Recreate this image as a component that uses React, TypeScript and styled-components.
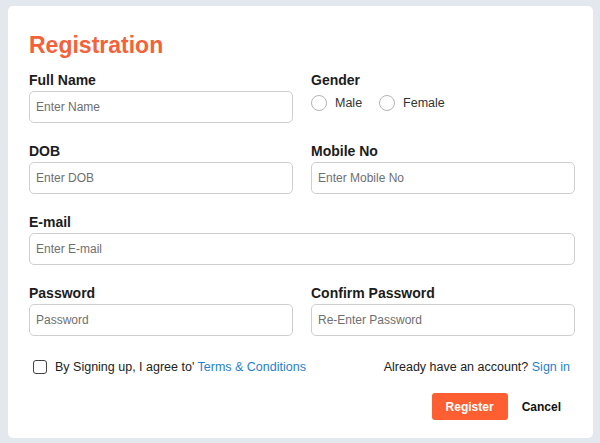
import styled, { createGlobalStyle } from 'styled-components'

const GlobalStyle = createGlobalStyle`
  body {
    margin: 0;
    background: #e3e7ee;
    font-family: "Liberation Sans", Arial, sans-serif;
  }
`

const Card = styled.form`
  box-sizing: border-box;
  width: 585px;
  margin: 6px 0 0 8px;
  padding: 26px 18px 18px 21px;
  background: #fff;
  border-radius: 5px;
`

const Title = styled.h1`
  margin: 0 0 14px;
  font-size: 23px;
  line-height: 26px;
  font-weight: 700;
  color: #f4623a;
`

const Grid = styled.div`
  display: grid;
  grid-template-columns: 264px 264px;
  column-gap: 18px;
  row-gap: 20px;
`

const Field = styled.div<{ $wide?: boolean }>`
  display: flex;
  flex-direction: column;
  grid-column: ${(p) => (p.$wide ? '1 / -1' : 'auto')};
`

const Label = styled.label`
  margin-bottom: 3px;
  font-size: 14px;
  line-height: 16px;
  font-weight: 700;
  color: #1c1c1c;
`

const Input = styled.input`
  box-sizing: border-box;
  height: 32px;
  padding: 0 6px;
  border: 1px solid #cfcfcf;
  border-radius: 5px;
  font-family: inherit;
  font-size: 12px;
  color: #222;
  outline: none;

  &::placeholder {
    color: #6f6f6f;
  }
`

const RadioGroup = styled.div`
  display: flex;
  align-items: center;
  gap: 17px;
  margin-top: 4px;
`

const RadioOption = styled.label`
  display: flex;
  align-items: center;
  gap: 8px;
  font-size: 12.5px;
  color: #333;
`

const Radio = styled.input.attrs({ type: 'radio' })`
  appearance: none;
  box-sizing: border-box;
  width: 16px;
  height: 16px;
  margin: 0;
  border: 1px solid #b5b5b5;
  border-radius: 50%;
  background: #fff;
`

const AgreeRow = styled.div`
  display: flex;
  justify-content: space-between;
  align-items: center;
  height: 14px;
  margin-top: 24px;
  padding-right: 5px;
  font-size: 12.5px;
  color: #222;
`

const CheckLabel = styled.label`
  display: flex;
  align-items: center;
  gap: 8px;
  padding-left: 4px;
`

const Checkbox = styled.input.attrs({ type: 'checkbox' })`
  appearance: none;
  box-sizing: border-box;
  width: 14px;
  height: 14px;
  margin: 0;
  border: 1.5px solid #444;
  border-radius: 3px;
  background: #fff;
`

const Link = styled.a`
  color: #1f7fd1;
  text-decoration: none;
`

const Actions = styled.div`
  display: flex;
  justify-content: flex-end;
  margin-top: 19px;
`

const Button = styled.button<{ $primary?: boolean }>`
  height: 27px;
  padding: 0 14px;
  border: none;
  border-radius: 3px;
  background: ${(p) => (p.$primary ? '#fd5f32' : 'transparent')};
  color: ${(p) => (p.$primary ? '#fff' : '#111')};
  font-family: inherit;
  font-size: 12px;
  font-weight: 700;
  cursor: pointer;
`

const App = () => {
  return (
    <>
      <GlobalStyle />
      <Card onSubmit={(e) => e.preventDefault()}>
        <Title>Registration</Title>
        <Grid>
          <Field>
            <Label>Full Name</Label>
            <Input placeholder='Enter Name' />
          </Field>
          <Field>
            <Label>Gender</Label>
            <RadioGroup>
              <RadioOption>
                <Radio name='gender' />
                Male
              </RadioOption>
              <RadioOption>
                <Radio name='gender' />
                Female
              </RadioOption>
            </RadioGroup>
          </Field>
          <Field>
            <Label>DOB</Label>
            <Input placeholder='Enter DOB' />
          </Field>
          <Field>
            <Label>Mobile No</Label>
            <Input placeholder='Enter Mobile No' />
          </Field>
          <Field $wide>
            <Label>E-mail</Label>
            <Input placeholder='Enter E-mail' />
          </Field>
          <Field>
            <Label>Password</Label>
            <Input type='password' placeholder='Password' />
          </Field>
          <Field>
            <Label>Confirm Password</Label>
            <Input type='password' placeholder='Re-Enter Password' />
          </Field>
        </Grid>
        <AgreeRow>
          <CheckLabel>
            <Checkbox />
            <span>
              By Signing up, I agree to' <Link href='#'>Terms &amp; Conditions</Link>
            </span>
          </CheckLabel>
          <span>
            Already have an account? <Link href='#'>Sign in</Link>
          </span>
        </AgreeRow>
        <Actions>
          <Button $primary type='submit'>Register</Button>
          <Button type='button'>Cancel</Button>
        </Actions>
      </Card>
    </>
  )
}

export default App
